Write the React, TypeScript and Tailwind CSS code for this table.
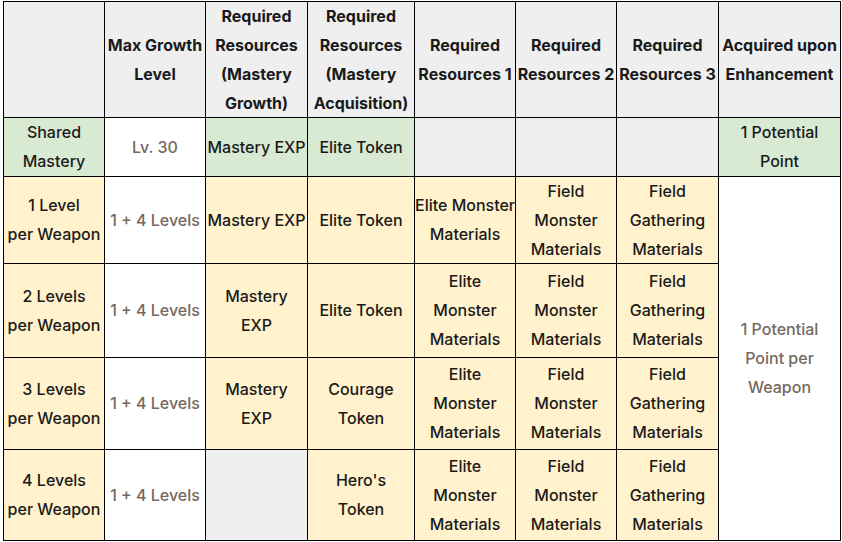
import React from "react";

type Bg = "h" | "g" | "y" | "w" | "e";

const bgClass: Record<Bg, string> = {
  h: "bg-[#efefef]",
  g: "bg-[#d9ead3]",
  y: "bg-[#fff2cc]",
  w: "bg-white",
  e: "bg-[#efefef]",
};

function Cell({
  lines,
  bg,
  bold,
  muted,
  className = "",
}: {
  lines?: string[];
  bg: Bg;
  bold?: boolean;
  muted?: boolean;
  className?: string;
}) {
  return (
    <div
      className={`${bgClass[bg]} flex flex-col items-center justify-center text-center whitespace-nowrap overflow-visible ${
        bold
          ? "font-bold text-[#1a1a1a]"
          : muted
          ? "font-medium text-[#76695f]"
          : "font-medium text-[#1a1a1a]"
      } ${className}`}
    >
      {lines?.map((l, i) => (
        <span key={i} className="block leading-[29px]">
          {l}
        </span>
      ))}
    </div>
  );
}

export default function App() {
  const rows = [
    { a: ["1 Level", "per Weapon"], c: ["Mastery EXP"], d: ["Elite Token"], e: ["Elite Monster", "Materials"] },
    { a: ["2 Levels", "per Weapon"], c: ["Mastery", "EXP"], d: ["Elite Token"], e: ["Elite", "Monster", "Materials"] },
    { a: ["3 Levels", "per Weapon"], c: ["Mastery", "EXP"], d: ["Courage", "Token"], e: ["Elite", "Monster", "Materials"] },
    { a: ["4 Levels", "per Weapon"], c: null, d: ["Hero's", "Token"], e: ["Elite", "Monster", "Materials"] },
  ];
  return (
    <div className="w-[842px] h-[542px] bg-white pl-[3px] pt-[1px] font-['Inter',sans-serif] text-[16px]">
      <div className="grid w-max gap-px p-px bg-black grid-cols-[100px_100px_101px_106px_100px_100px_101px_121px] grid-rows-[115px_58px_86px_93px_91px_90px]">
        <Cell bg="h" bold />
        <Cell bg="h" bold lines={["Max Growth", "Level"]} />
        <Cell bg="h" bold lines={["Required", "Resources", "(Mastery", "Growth)"]} />
        <Cell bg="h" bold lines={["Required", "Resources", "(Mastery", "Acquisition)"]} />
        <Cell bg="h" bold lines={["Required", "Resources 1"]} />
        <Cell bg="h" bold lines={["Required", "Resources 2"]} />
        <Cell bg="h" bold lines={["Required", "Resources 3"]} />
        <Cell bg="h" bold lines={["Acquired upon", "Enhancement"]} />

        <Cell bg="g" lines={["Shared", "Mastery"]} />
        <Cell bg="w" muted lines={["Lv. 30"]} />
        <Cell bg="g" lines={["Mastery EXP"]} />
        <Cell bg="g" lines={["Elite Token"]} />
        <Cell bg="e" />
        <Cell bg="e" />
        <Cell bg="e" />
        <Cell bg="g" lines={["1 Potential", "Point"]} />

        {rows.map((r, i) => (
          <React.Fragment key={i}>
            <Cell bg="y" lines={r.a} className="col-start-1" />
            <Cell bg="w" muted lines={["1 + 4 Levels"]} />
            {r.c ? <Cell bg="y" lines={r.c} /> : <Cell bg="e" />}
            <Cell bg="y" lines={r.d} />
            <Cell bg="y" lines={r.e} />
            <Cell bg="y" lines={["Field", "Monster", "Materials"]} />
            <Cell bg="y" lines={["Field", "Gathering", "Materials"]} />
            {i === 0 && (
              <Cell
                bg="w"
                muted
                lines={["1 Potential", "Point per", "Weapon"]}
                className="row-span-4"
              />
            )}
          </React.Fragment>
        ))}
      </div>
    </div>
  );
}
